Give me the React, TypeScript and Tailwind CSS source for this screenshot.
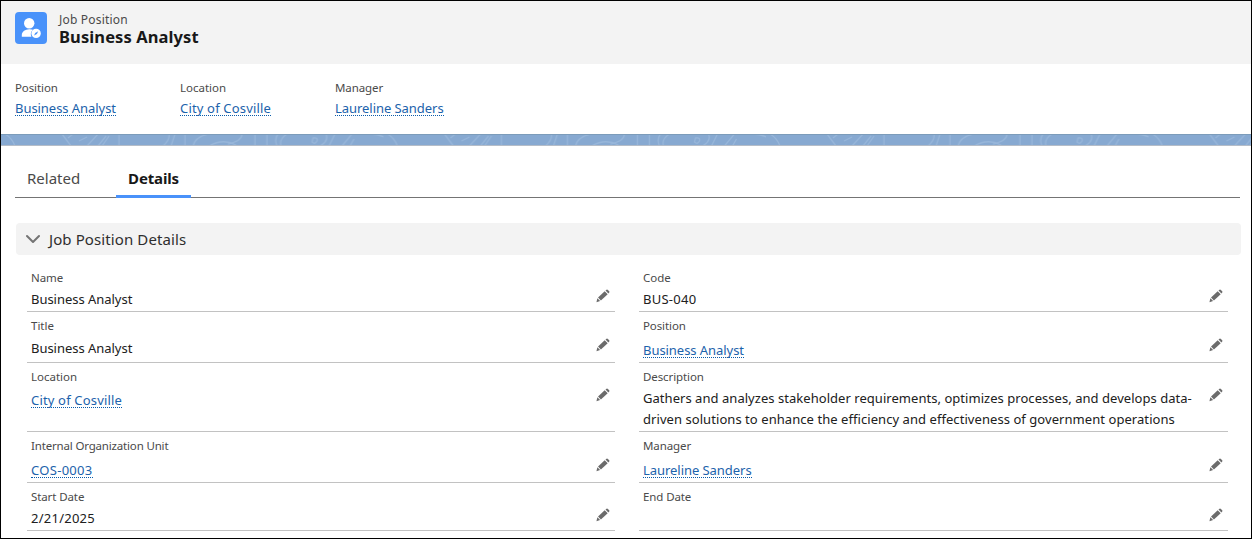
import React from 'react';

function Pencil({ className = '' }: { className?: string }) {
  return (
    <svg width="14" height="14" viewBox="0 0 14 14" fill="#6b6b6b" className={`absolute right-[5px] ${className}`}>
      <path d="M2 8.6 8.7 2.3 11.7 5.2 4.9 11.6Z" />
      <path d="M9.5 1.6 10.5.7Q11.2.2 11.9.9L13.2 2.2Q13.8 2.9 13.2 3.5L12.4 4.4Z" />
      <path d="M1.4 9.2 4.1 12 1.2 13.1Q.3 13.3.6 12.4Z" />
    </svg>
  );
}

function Link({ children, className = '' }: { children: React.ReactNode; className?: string }) {
  return (
    <a className={`block w-fit whitespace-nowrap border-b border-dotted border-[#0b5cab] pt-[2px] text-[13px] leading-[13px] text-[#1b62ab] ${className}`}>
      {children}
    </a>
  );
}

interface FieldProps {
  label: string;
  labelClass?: string;
  rowClass: string;
  iconClass: string;
  children?: React.ReactNode;
}

function Field({ label, labelClass = '', rowClass, iconClass, children }: FieldProps) {
  return (
    <div className={`relative border-b border-[#c2c2c2] pl-1 pt-[5px] ${rowClass}`}>
      <div className={`text-[11.5px] leading-[18px] text-[#4a4a4a] ${labelClass}`}>{label}</div>
      {children}
      <Pencil className={iconClass} />
    </div>
  );
}

function Value({ children, className = '' }: { children: React.ReactNode; className?: string }) {
  return <div className={`whitespace-nowrap text-[13px] leading-[21px] text-[#202020] ${className}`}>{children}</div>;
}

function Band() {
  return (
    <svg width="1250" height="12" className="block shrink-0">
      <defs>
        <pattern id="contours" width="382.5" height="12" patternUnits="userSpaceOnUse">
          <rect width="383" height="12" fill="#87a9d1" />
          <g fill="none" stroke="#97b6da" strokeWidth="1.3">
            <path d="M4 0Q11 4 14 12M61 0 67 8 70 12M67 4 72 0M78 7 86 3M86 12 97 0M97 12 105 2M101 12 108 2M118 0V12M162 12Q169 6 168 0M170 12 174 0M184 0V12M192 12Q194 3 207 0M208 12Q222 4 235 11M227 10Q241 7 241 0M254 0V12M266 0V12M276 12Q273 5 277 0M280 12Q278 5 286 0M312 4Q317 3 316 7Q314 11 311 8ZM319 12Q328 7 325 0M328 12 334 0M341 12 351 0M349 12 353 5M369 0Q384 0 396 12" />
          </g>
        </pattern>
      </defs>
      <rect width="1250" height="12" fill="url(#contours)" />
      <rect width="1250" height="1" fill="#7c9cba" />
      <rect y="11" width="1250" height="1" fill="#b5bdc8" />
    </svg>
  );
}

export default function App() {
  return (
    <div className="flex h-[539px] w-[1252px] flex-col overflow-hidden border border-black bg-white font-['Noto_Sans','Open_Sans',sans-serif]">
      <header className="flex h-[63px] shrink-0 gap-3 bg-[#f3f3f3] pl-[14px] pt-[11px]">
        <svg width="32" height="32" viewBox="0 0 32 32">
          <rect width="32" height="32" rx="4" fill="#4992fa" />
          <circle cx="14.2" cy="11.3" r="5.2" fill="#fff" />
          <path d="M6.8 24.8V23.2C6.8 19.2 10.4 17.4 14.2 17.2 15.8 17.1 17 17.4 18 17.8 15.6 19.7 15.3 22.6 16.4 24.8Z" fill="#fff" />
          <circle cx="21.1" cy="21.4" r="4.7" fill="#fff" />
          <path d="M19.1 23.5 20.2 20.9 23.2 19.3 21.9 22Z" fill="#4992fa" />
        </svg>
        <div className="whitespace-nowrap">
          <div className="-mt-px text-[12px] leading-[18px] tracking-[0.2px] text-[#4a4a4a]">Job Position</div>
          <div className="-mt-px text-[16.5px] font-bold leading-[18px] tracking-[0.1px] text-[#181818]">Business Analyst</div>
        </div>
      </header>
      <div className="flex h-[70px] shrink-0 pl-[14px] pt-[15px]">
        <div className="w-[165px]">
          <div className="text-[11.5px] leading-[18px] tracking-[-0.1px] text-[#4a4a4a]">Position</div>
          <Link className="mt-[3px] tracking-[-0.05px]">Business Analyst</Link>
        </div>
        <div className="w-[155px]">
          <div className="text-[11.5px] leading-[18px] text-[#4a4a4a]">Location</div>
          <Link className="mt-[3px] tracking-[0.17px]">City of Cosville</Link>
        </div>
        <div>
          <div className="text-[11.5px] leading-[18px] tracking-[-0.1px] text-[#4a4a4a]">Manager</div>
          <Link className="mt-[3px] tracking-[-0.05px]">Laureline Sanders</Link>
        </div>
      </div>
      <Band />
      <nav className="ml-[14px] mt-[14px] flex h-[38px] w-[1225px] shrink-0 border-b border-[#747474] text-[15px] leading-[37px]">
        <div className="w-[101px] pl-3 text-[#4a4a4a]">Related</div>
        <div className="-mb-px h-[38px] w-[75px] border-b-[3px] border-[#4992fa] text-center font-bold tracking-[-0.15px] text-[#181818]">Details</div>
      </nav>
      <div className="ml-[15px] mt-[25px] flex h-[32px] w-[1225px] shrink-0 items-center rounded bg-[#f3f3f3] pl-[10px] text-[15px] tracking-[0.1px] text-[#2e2e2e]">
        <svg width="14" height="10" viewBox="0 0 14 10" fill="none" stroke="#747474" strokeWidth="2" strokeLinecap="round" strokeLinejoin="round">
          <path d="M1 2 7 8 13 2" />
        </svg>
        <span className="ml-[9px]">Job Position Details</span>
      </div>
      <div className="ml-[26px] mt-[9px] flex gap-[24px]">
        <div className="w-[588px]">
          <Field label="Name" labelClass="tracking-[-0.1px]" rowClass="h-[48px]" iconClass="top-[25px]">
            <Value className="mt-[2px] tracking-[-0.03px]">Business Analyst</Value>
          </Field>
          <Field label="Title" rowClass="h-[51px]" iconClass="top-[26px]">
            <Value className="mt-[3px] tracking-[-0.03px]">Business Analyst</Value>
          </Field>
          <Field label="Location" rowClass="h-[69px]" iconClass="top-[25px]">
            <Link className="mt-[6px] tracking-[0.17px]">City of Cosville</Link>
          </Field>
          <Field label="Internal Organization Unit" labelClass="tracking-[-0.17px]" rowClass="h-[51px]" iconClass="top-[26px]">
            <Link className="mt-[7px] tracking-[0.3px]">COS-0003</Link>
          </Field>
          <Field label="Start Date" labelClass="tracking-[-0.1px]" rowClass="h-[48px]" iconClass="top-[25px]">
            <Value className="mt-[2px] tracking-[0.25px]">2/21/2025</Value>
          </Field>
        </div>
        <div className="w-[589px]">
          <Field label="Code" rowClass="h-[48px]" iconClass="top-[25px]">
            <Value className="mt-[2px] tracking-[0.25px]">BUS-040</Value>
          </Field>
          <Field label="Position" labelClass="tracking-[-0.1px]" rowClass="h-[51px]" iconClass="top-[26px]">
            <Link className="mt-[7px] tracking-[-0.05px]">Business Analyst</Link>
          </Field>
          <Field label="Description" labelClass="tracking-[-0.1px]" rowClass="h-[69px]" iconClass="top-[25px]">
            <Value className="mt-[2px] tracking-[0.04px]">
              Gathers and analyzes stakeholder requirements, optimizes processes, and develops data-
              <br />
              <span className="tracking-[0.06px]">driven solutions to enhance the efficiency and effectiveness of government operations</span>
            </Value>
          </Field>
          <Field label="Manager" labelClass="tracking-[-0.1px]" rowClass="h-[51px]" iconClass="top-[26px]">
            <Link className="mt-[7px] tracking-[-0.05px]">Laureline Sanders</Link>
          </Field>
          <Field label="End Date" labelClass="tracking-[-0.1px]" rowClass="h-[48px]" iconClass="top-[25px]" />
        </div>
      </div>
    </div>
  );
}
